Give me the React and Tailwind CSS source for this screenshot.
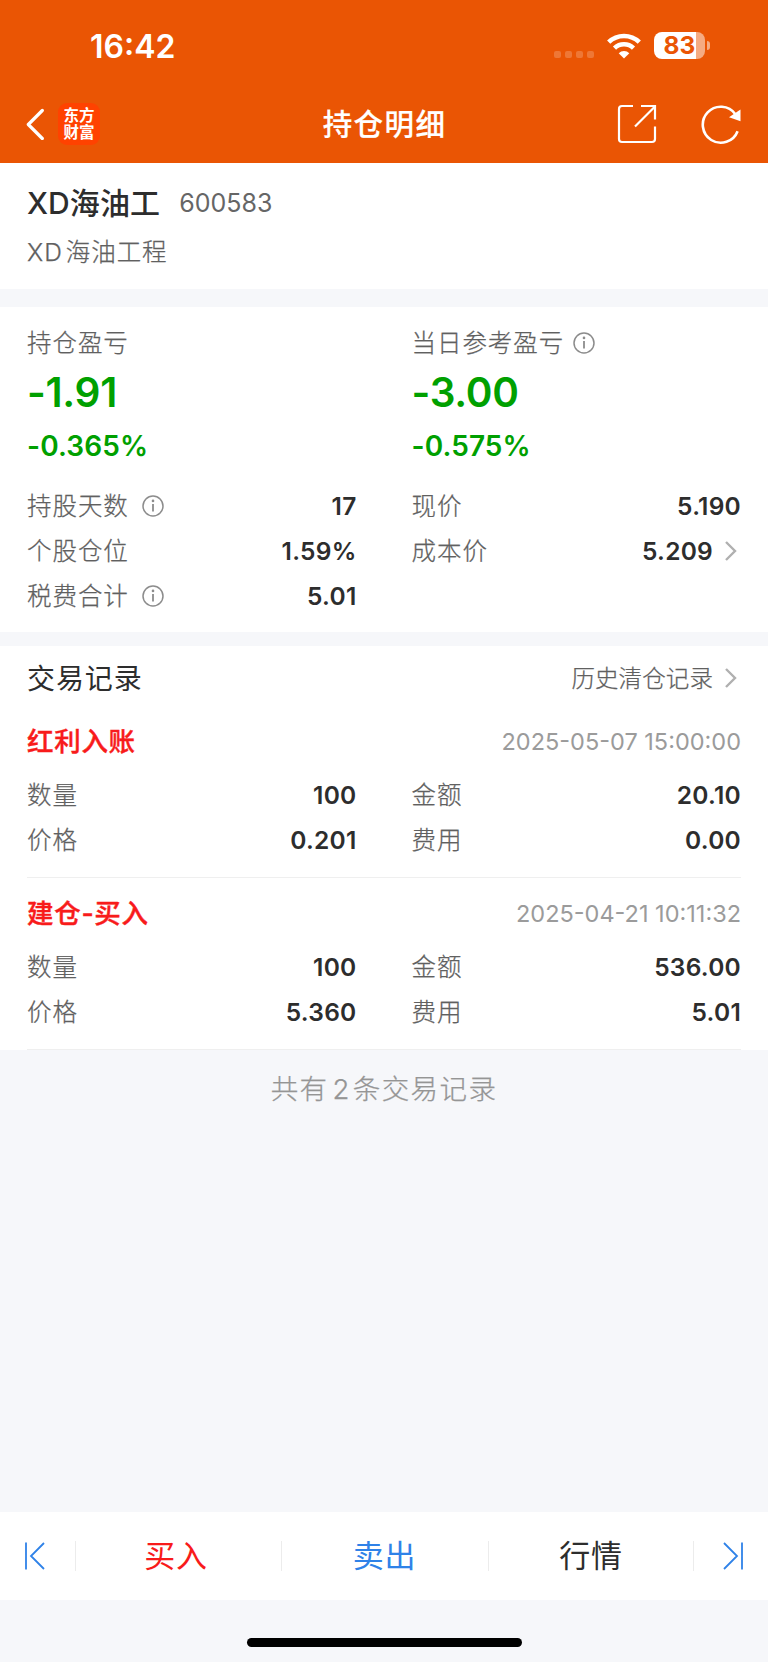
const HOLDING_LEFT = [
  { label: '持股天数', value: '17', info: true },
  { label: '个股仓位', value: '1.59%' },
  { label: '税费合计', value: '5.01', info: true },
];

const HOLDING_RIGHT = [
  { label: '现价', value: '5.190' },
  { label: '成本价', value: '5.209', link: true },
];

const RECORDS = [
  { type: '红利入账', time: '2025-05-07 15:00:00', qty: '100', amount: '20.10', price: '0.201', fee: '0.00' },
  { type: '建仓-买入', time: '2025-04-21 10:11:32', qty: '100', amount: '536.00', price: '5.360', fee: '5.01' },
];

function InfoIcon({ className }) {
  return (
    <svg viewBox="0 0 22 22" className={`w-[22px] h-[22px] shrink-0 -mt-px ${className}`} fill="none" stroke="#8c8c8c">
      <circle cx="11" cy="11" r="10" strokeWidth="1.5" />
      <path d="M11 9v7.6" strokeWidth="1.8" />
      <circle cx="11" cy="5.9" r="1.3" fill="#8c8c8c" stroke="none" />
    </svg>
  );
}

function ChevronIcon() {
  return (
    <svg viewBox="0 0 12 20" className="w-3 h-5 shrink-0 ml-3 mr-1 -mt-px" fill="none" stroke="#b0b0b0" strokeWidth="2.4">
      <path d="M1 1l9 9-9 9" />
    </svg>
  );
}

function Label({ children }) {
  return (
    <span className="text-[24.5px] tracking-[0.95px] font-light text-[#606060] [-webkit-text-stroke:0.25px_#606060]">
      {children}
    </span>
  );
}

function Row({ label, value, info, link }) {
  return (
    <div className="h-[45px] flex items-center justify-between">
      <div className="flex items-center">
        <Label>{label}</Label>
        {info && <InfoIcon className="ml-[13px]" />}
      </div>
      <div className="flex items-center">
        <span className="text-[24.5px] tracking-[0.25px] font-semibold text-[#2d2d2d]">{value}</span>
        {link && <ChevronIcon />}
      </div>
    </div>
  );
}

function Profit({ label, value, percent, info }) {
  return (
    <div>
      <div className="h-[42px] flex items-center">
        <Label>{label}</Label>
        {info && <InfoIcon className="ml-[9px]" />}
      </div>
      <div className="h-[58px] pt-px flex items-center text-[40.5px] tracking-[-0.3px] font-semibold text-[#00a000]">{value}</div>
      <div className="h-[46px] pt-px flex items-center text-[28px] tracking-[0.1px] font-semibold text-[#00a000]">{percent}</div>
    </div>
  );
}

function StatusBar() {
  return (
    <div className="h-[91px] pl-[90px] pr-[58px] flex items-center justify-between text-white">
      <span className="pt-[2px] text-[32px] font-semibold">16:42</span>
      <div className="flex items-center">
        <div className="flex gap-1 mr-[13px] mt-[17px]">
          <span className="w-[7px] h-[7px] rounded-[2px] bg-white/20" />
          <span className="w-[7px] h-[7px] rounded-[2px] bg-white/20" />
          <span className="w-[7px] h-[7px] rounded-[2px] bg-white/20" />
          <span className="w-[7px] h-[7px] rounded-[2px] bg-white/20" />
        </div>
        <svg viewBox="0 0 34 26" className="w-[34px] h-[26px]" fill="none" stroke="#fff" strokeWidth="4.6">
          <path d="M1.7 9.2a22 22 0 0 1 30.6 0" />
          <path d="M7.5 15.1a13.8 13.8 0 0 1 19 0" />
          <path d="M17 25.5l-5.3-5.3a7.6 7.6 0 0 1 10.6 0z" fill="#fff" stroke="none" />
        </svg>
        <div className="ml-[13px] w-[51px] h-[27px] rounded-[8px] bg-[linear-gradient(to_right,#fff_83%,#f5ab82_83%)] flex items-center justify-center">
          <span className="text-[24.5px] font-bold text-[#ea5504]">83</span>
        </div>
        <span className="ml-[2px] w-[3px] h-[9px] rounded-r-full bg-[#f5ab82]" />
      </div>
    </div>
  );
}

function NavBar() {
  return (
    <div className="h-[72px] px-[26px] flex items-center justify-between pb-[6px]">
      <div className="w-[133px] flex items-center">
        <svg viewBox="0 0 18 32" className="w-[18px] h-8" fill="none" stroke="#fff" strokeWidth="3.2" strokeLinecap="round" strokeLinejoin="round">
          <path d="M16.3 2.5L2.3 16.5l14 14" />
        </svg>
        <div className="ml-[14px] w-[42px] h-[42px] rounded-[9px] bg-[#ff4200] flex flex-col items-center justify-center text-white text-[15.5px] leading-[17.5px] font-bold">
          <span>东方</span>
          <span>财富</span>
        </div>
      </div>
      <h1 className="pl-px text-[29.5px] tracking-[1.4px] font-medium text-white [-webkit-text-stroke:0.2px_#fff]">持仓明细</h1>
      <div className="w-[133px] flex items-center justify-end">
        <svg viewBox="0 0 40 40" className="w-10 h-10" fill="none" stroke="#fff" strokeWidth="2.2">
          <path d="M16 2H5a3 3 0 0 0-3 3v30a3 3 0 0 0 3 3h30a3 3 0 0 0 3-3V22.5" />
          <path d="M24 2h14v13.5M18 22.5L38 2.5" />
        </svg>
        <svg viewBox="0 0 42 42" className="ml-[43px] w-[42px] h-[42px]" fill="none" stroke="#fff" strokeWidth="2.6">
          <path d="M37.6 28.2a18 18 0 1 1-2.2-17" />
          <path d="M40.5 6.5v11.7l-11.5-3.9z" fill="#fff" stroke="none" />
        </svg>
      </div>
    </div>
  );
}

function Record({ type, time, qty, amount, price, fee }) {
  return (
    <div className="mx-[27px] h-[172px] pt-[14px] border-b border-[#efefef]">
      <div className="h-[44px] flex items-center justify-between">
        <span className="text-[26.5px] tracking-[0.7px] font-medium text-[#f81b1b] [-webkit-text-stroke:0.4px_#f81b1b]">{type}</span>
        <span className="text-[23.5px] text-[#9b9b9b]">{time}</span>
      </div>
      <div className="mt-[9px] grid grid-cols-2 gap-x-[55px]">
        <Row label="数量" value={qty} />
        <Row label="金额" value={amount} />
        <Row label="价格" value={price} />
        <Row label="费用" value={fee} />
      </div>
    </div>
  );
}

export default function App() {
  return (
    <main className="w-[768px] h-[1662px] flex flex-col bg-[#f6f7fa] whitespace-nowrap font-['Inter','Noto_Sans_CJK_SC',sans-serif]">
      <header className="h-[163px] bg-[#ea5504]">
        <StatusBar />
        <NavBar />
      </header>

      {/* Stock name */}
      <section className="h-[126px] px-[27px] pt-[17px] bg-white">
        <div className="h-[46px] flex items-center">
          <span className="text-[30px] tracking-[0.1px] font-medium text-[#2d2d2d]">XD海油工</span>
          <span className="ml-[19px] pt-px text-[25px] text-[#666]">600583</span>
        </div>
        <div className="h-[52px] pt-px flex items-center">
          <Label>XD</Label>
          <span className="w-[3px]" />
          <Label>海油工程</Label>
        </div>
      </section>

      {/* Profit and position */}
      <section className="mt-[18px] h-[325px] px-[27px] pt-[15px] bg-white">
        <div className="grid grid-cols-2 gap-x-[55px]">
          <Profit label="持仓盈亏" value="-1.91" percent="-0.365%" />
          <Profit label="当日参考盈亏" value="-3.00" percent="-0.575%" info />
        </div>
        <div className="mt-[16px] grid grid-cols-2 gap-x-[55px]">
          <div>
            {HOLDING_LEFT.map((r) => <Row key={r.label} {...r} />)}
          </div>
          <div>
            {HOLDING_RIGHT.map((r) => <Row key={r.label} {...r} />)}
          </div>
        </div>
      </section>

      {/* Trade records */}
      <section className="mt-[14px] bg-white">
        <div className="h-[60px] mx-[27px] pt-[5px] flex items-center justify-between">
          <h2 className="text-[28px] tracking-[0.9px] text-[#2d2d2d]">交易记录</h2>
          <div className="flex items-center">
            <span className="text-[23.5px] tracking-[0.1px] font-light text-[#606060] [-webkit-text-stroke:0.25px_#606060]">历史清仓记录</span>
            <ChevronIcon />
          </div>
        </div>
        {RECORDS.map((r) => <Record key={r.time} {...r} />)}
      </section>
      <p className="h-[80px] flex items-center justify-center text-[27.5px] tracking-[1.4px] font-light text-[#959595] [-webkit-text-stroke:0.25px_#959595]">
        共有<span className="ml-[4px] mr-[2px]">2</span>条交易记录
      </p>

      {/* Bottom actions */}
      <nav className="mt-auto h-[88px] bg-white flex items-center text-[31px] tracking-[0.8px]">
        <div className="w-[75px] flex justify-center pr-[6px]">
          <svg viewBox="0 0 22 28" className="w-[22px] h-7" fill="none" stroke="#2f82e8" strokeWidth="1.8">
            <path d="M2 .5v27M20 1L7 14l13 13" />
          </svg>
        </div>
        <button className="w-[206px] h-[30px] pr-[5px] border-l border-[#ececec] flex items-center justify-center text-[#f81b1b]">买入</button>
        <button className="w-[207px] h-[30px] pr-px border-l border-[#ececec] flex items-center justify-center text-[#2f82e8]">卖出</button>
        <button className="w-[206px] h-[30px] border-x border-[#ececec] flex items-center justify-center text-[#2d2d2d]">行情</button>
        <div className="flex-1 flex justify-center pl-1">
          <svg viewBox="0 0 22 28" className="w-[22px] h-7" fill="none" stroke="#2f82e8" strokeWidth="1.8">
            <path d="M20 .5v27M2 1l13 13L2 27" />
          </svg>
        </div>
      </nav>
      <div className="h-[62px] pt-[38px] flex justify-center">
        <div className="w-[275px] h-[9px] rounded-full bg-black" />
      </div>
    </main>
  );
}
